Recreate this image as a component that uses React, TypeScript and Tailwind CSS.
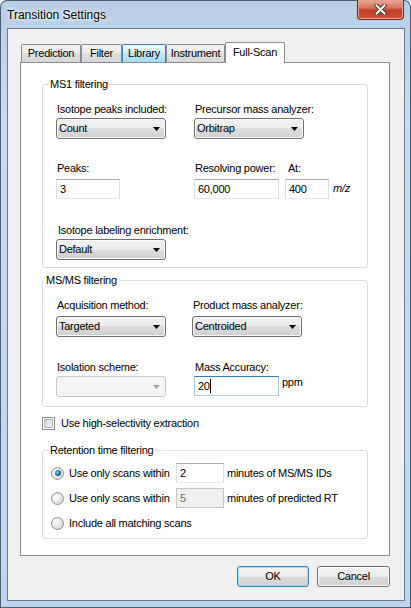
import React from "react";

const btnFace = "bg-[linear-gradient(#f2f2f2,#ebebeb_50%,#dddddd_50%,#cfcfcf)]";

function Arrow({ disabled }: { disabled?: boolean }) {
  return (
    <svg width="7" height="4" viewBox="0 0 7 4" className="shrink-0">
      <path d="M0 0h7L3.5 4z" fill={disabled ? "#a3a3a3" : "#000"} />
    </svg>
  );
}

function Combo({ value, disabled }: { value?: string; disabled?: boolean }) {
  return (
    <div
      className={
        disabled
          ? "flex h-[21px] w-[110px] items-center justify-between rounded-[3px] border border-[#c5c8cb] bg-[#f4f4f4] pl-[2px] pr-[5px]"
          : "flex h-[21px] w-[110px] items-center justify-between rounded-[3px] border border-[#707070] bg-[linear-gradient(#f2f2f2,#ebebeb_50%,#dddddd_50%,#cfcfcf)] pl-[2px] pr-[5px] shadow-[inset_0_0_0_1px_#fbfbfb]"
      }
    >
      <span>{value}</span>
      <Arrow disabled={disabled} />
    </div>
  );
}

function TextBox({
  value,
  className,
  disabled,
  focused,
}: {
  value: string;
  className: string;
  disabled?: boolean;
  focused?: boolean;
}) {
  let look = "border-[#abadb3] border-x-[#dbdfe6] border-b-[#e3e9ef] bg-white";
  if (disabled) look = "border-[#c5c8cb] bg-[#f0f0f0] text-[#6d6d6d]";
  if (focused) look = "border-[#3d7bad] border-x-[#a4c9e3] border-b-[#b5cfe7] bg-white";
  return (
    <div className={`flex h-[20px] items-center border pl-[3px] ${look} ${className}`}>
      <span>{value}</span>
      {focused && <span className="h-[14px] w-px bg-black" />}
    </div>
  );
}

function Radio({ checked }: { checked?: boolean }) {
  return (
    <div className="flex h-[13px] w-[13px] shrink-0 items-center justify-center rounded-full border border-[#8e8f8f] bg-[radial-gradient(circle_at_35%_35%,#ffffff,#dcdcdc_70%,#cfcfcf)]">
      {checked && (
        <div className="h-[6px] w-[6px] rounded-full bg-[radial-gradient(circle_at_40%_40%,#6fc8ee,#1d6f9e_55%,#0b3550)]" />
      )}
    </div>
  );
}

function Checkbox() {
  return (
    <div className="flex h-[13px] w-[13px] shrink-0 items-center justify-center border border-[#8e8f8f] bg-white">
      <div className="h-[9px] w-[9px] border border-[#b1b6ba] bg-[linear-gradient(135deg,#cdd1d6,#f4f4f4)]" />
    </div>
  );
}

function Tab({
  label,
  w,
  selected,
  hover,
}: {
  label: string;
  w: string;
  selected?: boolean;
  hover?: boolean;
}) {
  if (selected)
    return (
      <div className={`relative z-10 -mb-px flex h-[21px] justify-center rounded-t-[2px] border border-b-0 border-[#898c95] bg-white pt-[3px] ${w}`}>
        {label}
      </div>
    );
  return (
    <div
      className={
        hover
          ? `flex h-[18px] items-center justify-center rounded-t-[2px] border border-b-0 border-[#3c7fb1] bg-[linear-gradient(#eaf6fd,#d9f0fc_45%,#bee6fd_50%,#a7d9f5)] ${w}`
          : `flex h-[18px] items-center justify-center rounded-t-[2px] border border-b-0 border-[#898c95] bg-[linear-gradient(#f3f3f3,#ebebeb_45%,#dfdfdf_50%,#d7d7d7)] ${w}`
      }
    >
      {label}
    </div>
  );
}

function RadioRow({
  checked,
  text,
  value,
  suffix,
  disabled,
  className,
}: {
  checked?: boolean;
  text: string;
  value?: string;
  suffix?: string;
  disabled?: boolean;
  className: string;
}) {
  return (
    <div className={`flex h-[20px] items-center ${className}`}>
      <Radio checked={checked} />
      <span className="ml-[5px] w-[107px] whitespace-nowrap">{text}</span>
      {value !== undefined && <TextBox className="w-[48px]" value={value} disabled={disabled} />}
      {suffix && <span className="ml-[3px] whitespace-nowrap">{suffix}</span>}
    </div>
  );
}

export default function App() {
  return (
    <div className="flex h-[608px] w-[411px] flex-col overflow-hidden rounded-t-[7px] bg-[linear-gradient(180deg,#b7cde6,#c9dcf0_20%,#c2d8ef_60%,#bdd6f0)] font-['Liberation_Sans',Arial,sans-serif] text-[11px] leading-[13px] tracking-[-0.25px] text-black shadow-[inset_0_0_0_1px_#4e5d6e]">
      <div className="flex h-[28px] shrink-0">
        <div className="pl-[7px] pt-[8px] text-[12px] leading-[15px] tracking-normal [text-shadow:0_0_6px_#ffffff,0_0_3px_#ffffff]">
          Transition Settings
        </div>
        <div className="ml-auto mr-[7px] flex h-[20px] w-[47px] items-center justify-center rounded-b-[4px] border border-t-0 border-[#6e2c22] bg-[linear-gradient(#e9a999,#d67560_40%,#c23f25_55%,#cc5238)] shadow-[inset_0_0_0_1px_#eea090]">
          <svg width="13" height="11" viewBox="0 0 13 11">
            <path d="M2.5 1.5l8 8M10.5 1.5l-8 8" stroke="#3b3b3b" strokeWidth="4" strokeLinecap="square" />
            <path d="M2.5 1.5l8 8M10.5 1.5l-8 8" stroke="#ffffff" strokeWidth="2" strokeLinecap="square" />
          </svg>
        </div>
      </div>

      <div className="ml-[7px] h-[573px] w-[398px] border border-[#707d8c] bg-[#f0f0f0]">
        <div className="ml-[13px] mt-[13px] flex h-[20px] items-end">
          <Tab label="Prediction" w="w-[60px]" />
          <Tab label="Filter" w="w-[41px]" />
          <Tab label="Library" w="w-[44px]" hover />
          <Tab label="Instrument" w="w-[59px]" />
          <Tab label="Full-Scan" w="w-[60px]" selected />
        </div>

        <div className="ml-[12px] h-[494px] w-[370px] border border-[#898c95] bg-white">
          <fieldset className="ml-[21px] mt-[15px] w-[326px] rounded-[3px] border border-[#d5dfe5]">
            <legend className="ml-[6px] px-[1px]">MS1 filtering</legend>
            <div className="pb-[7px] pl-[13px]">
              <div className="mt-[12px] flex">
                <div className="w-[138px]">
                  <div className="pl-[1px]">Isotope peaks included:</div>
                  <div className="mt-[2px]">
                    <Combo value="Count" />
                  </div>
                </div>
                <div>
                  <div className="pl-[1px]">Precursor mass analyzer:</div>
                  <div className="mt-[2px]">
                    <Combo value="Orbitrap" />
                  </div>
                </div>
              </div>
              <div className="mt-[23px] flex">
                <div className="w-[138px]">
                  <div className="pl-[1px]">Peaks:</div>
                  <TextBox className="mt-[4px] w-[64px]" value="3" />
                </div>
                <div>
                  <div className="flex">
                    <span className="w-[94px] pl-[1px]">Resolving power:</span>
                    <span>At:</span>
                  </div>
                  <div className="mt-[4px] flex items-start">
                    <TextBox className="w-[85px]" value="60,000" />
                    <TextBox className="ml-[6px] w-[44px]" value="400" />
                    <span className="ml-[4px] pt-[3px] italic">m/z</span>
                  </div>
                </div>
              </div>
              <div className="mt-[25px]">
                <div className="pl-[2px]">Isotope labeling enrichment:</div>
                <div className="mt-[2px]">
                  <Combo value="Default" />
                </div>
              </div>
            </div>
          </fieldset>

          <fieldset className="ml-[21px] mt-[6px] w-[326px] rounded-[3px] border border-[#d5dfe5]">
            <legend className="ml-[1px] px-[2px]">MS/MS filtering</legend>
            <div className="pb-[9px] pl-[13px]">
              <div className="mt-[12px] flex">
                <div className="w-[136px]">
                  <div className="pl-[1px]">Acquisition method:</div>
                  <div className="mt-[4px]">
                    <Combo value="Targeted" />
                  </div>
                </div>
                <div>
                  <div className="pl-[1px]">Product mass analyzer:</div>
                  <div className="mt-[4px]">
                    <Combo value="Centroided" />
                  </div>
                </div>
              </div>
              <div className="mt-[24px] flex">
                <div className="w-[138px]">
                  <div className="pl-[1px]">Isolation scheme:</div>
                  <div className="mt-[2px]">
                    <Combo disabled />
                  </div>
                </div>
                <div>
                  <div className="pl-[1px]">Mass Accuracy:</div>
                  <div className="mt-[2px] flex items-start">
                    <TextBox className="w-[85px]" value="20" focused />
                    <span className="ml-[3px]">ppm</span>
                  </div>
                </div>
              </div>
            </div>
          </fieldset>

          <div className="ml-[21px] mt-[10px] flex h-[13px] items-center">
            <Checkbox />
            <span className="ml-[6px]">Use high-selectivity extraction</span>
          </div>

          <fieldset className="ml-[21px] mt-[14px] w-[326px] rounded-[3px] border border-[#d5dfe5]">
            <legend className="ml-[5px] px-[2px]">Retention time filtering</legend>
            <div className="pb-[5px] pl-[8px]">
              <RadioRow
                className="mt-[6px]"
                checked
                text="Use only scans within"
                value="2"
                suffix="minutes of MS/MS IDs"
              />
              <RadioRow
                className="mt-[5px]"
                text="Use only scans within"
                value="5"
                disabled
                suffix="minutes of predicted RT"
              />
              <RadioRow className="mt-[5px]" text="Include all matching scans" />
            </div>
          </fieldset>
        </div>

        <div className="mt-[10px] flex justify-end gap-[8px] pr-[14px]">
          <button className="h-[21px] w-[72px] rounded-[3px] border border-[#3c7fb1] bg-[linear-gradient(#f2f2f2,#ebebeb_50%,#dddddd_50%,#cfcfcf)] shadow-[inset_0_0_0_1px_#9fdcf7]">
            OK
          </button>
          <button className={`h-[21px] w-[73px] rounded-[3px] border border-[#707070] ${btnFace} shadow-[inset_0_0_0_1px_#fbfbfb]`}>
            Cancel
          </button>
        </div>
      </div>
    </div>
  );
}
